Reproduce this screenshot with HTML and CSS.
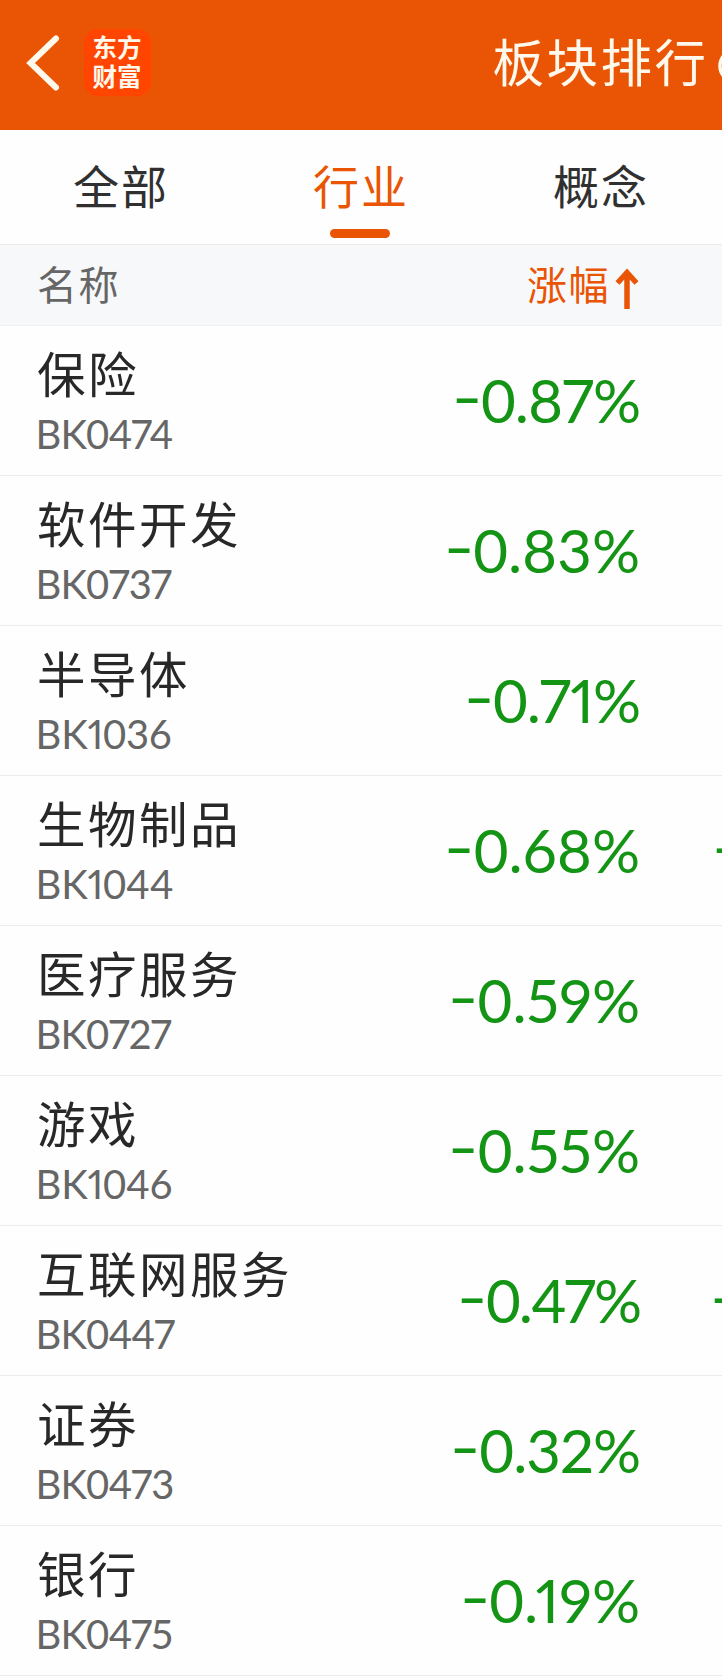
FILE: index.html
```html
<!DOCTYPE html>
<html lang="zh-CN">
<head>
<meta charset="utf-8">
<title>板块排行</title>
<link rel="stylesheet" href="styles.css">
</head>
<body>
<header class="topbar">
  <svg class="back" viewBox="0 0 34 56" width="34" height="56"><path d="M30 3.500 4.500 28 30 52.500" fill="none" stroke="#fff8ec" stroke-width="6" stroke-linecap="round" stroke-linejoin="miter"/></svg>
  <div class="brand"><span>东方</span><span>财富</span></div>
  <h1 class="title">板块排行</h1>
  <svg class="help" viewBox="0 0 36 36" width="36" height="36"><circle cx="18" cy="18" r="16" fill="none" stroke="#fff8ec" stroke-width="3.500"/></svg>
</header>
<nav class="tabs">
  <a class="tab">全部</a>
  <a class="tab active">行业</a>
  <a class="tab">概念</a>
</nav>
<main class="table">
  <div class="head">
    <span class="head-name">名称</span>
    <span class="head-sort">涨幅</span>
    <svg class="arrow" viewBox="0 0 24 42" width="24" height="42"><path d="M12 41V5M2.500 15 12 4.500 21.500 15" fill="none" stroke="#e95504" stroke-width="5.500"/></svg>
  </div>
  <div class="row"><div class="info"><b class="name">保险</b><span class="code">BK<i class="zero">0</i>474</span></div><span class="rate tight"><i class="sign">-</i><i class="zero">0</i>.87%</span></div>
  <div class="row"><div class="info"><b class="name">软件开发</b><span class="code">BK<i class="zero">0</i>737</span></div><span class="rate"><i class="sign">-</i><i class="zero">0</i>.83%</span></div>
  <div class="row"><div class="info"><b class="name">半导体</b><span class="code one">BK1<i class="zero">0</i>36</span></div><span class="rate tight"><i class="sign">-</i><i class="zero">0</i>.71%</span></div>
  <div class="row"><div class="info"><b class="name">生物制品</b><span class="code one">BK1<i class="zero">0</i>44</span></div><span class="rate"><i class="sign">-</i><i class="zero">0</i>.68%</span><span class="next"><i class="sign">-</i></span></div>
  <div class="row"><div class="info"><b class="name">医疗服务</b><span class="code">BK<i class="zero">0</i>727</span></div><span class="rate"><i class="sign">-</i><i class="zero">0</i>.59%</span></div>
  <div class="row"><div class="info"><b class="name">游戏</b><span class="code one">BK1<i class="zero">0</i>46</span></div><span class="rate"><i class="sign">-</i><i class="zero">0</i>.55%</span></div>
  <div class="row"><div class="info"><b class="name">互联网服务</b><span class="code">BK<i class="zero">0</i>447</span></div><span class="rate tighter"><i class="sign">-</i><i class="zero">0</i>.47%</span><span class="next wide"><i class="sign">-</i></span></div>
  <div class="row"><div class="info"><b class="name">证券</b><span class="code">BK<i class="zero">0</i>473</span></div><span class="rate tight"><i class="sign">-</i><i class="zero">0</i>.32%</span></div>
  <div class="row"><div class="info"><b class="name">银行</b><span class="code">BK<i class="zero">0</i>475</span></div><span class="rate"><i class="sign">-</i><i class="zero">0</i>.19%</span></div>
</main>
</body>
</html>
```
FILE: styles.css
```css
* { box-sizing: border-box; }
body {
  margin: 0;
  width: 722px;
  height: 1680px;
  overflow: hidden;
  background: #fefefe;
  font-family: "Noto Sans CJK SC", sans-serif;
  color: #282828;
}
.topbar {
  display: flex;
  align-items: center;
  height: 130px;
  padding-left: 26px;
  background: #e95504;
  color: #fff8ec;
  overflow: hidden;
}
.back { flex: none; margin-top: -5px; }
.brand {
  flex: none;
  display: flex;
  flex-direction: column;
  align-items: center;
  width: 67px;
  height: 67px;
  margin: -5px 0 0 23.500px;
  padding-top: 3px;
  border-radius: 14px;
  background: #ff4500;
  font-size: 24.500px;
  font-weight: 700;
  line-height: 29px;
}
.title {
  flex: none;
  margin: -10px 0 0 342px;
  font-size: 51.500px;
  font-weight: 400;
  line-height: 70px;
  letter-spacing: 2.500px;
}
.help { flex: none; margin: 2px 0 0 9.500px; }
.tabs {
  display: flex;
  height: 115px;
  border-bottom: 1px solid #ebebeb;
}
.tab {
  flex: none;
  display: flex;
  flex-direction: column;
  align-items: center;
  width: 240px;
  padding-top: 21px;
  font-size: 46px;
  line-height: 66px;
  letter-spacing: 2px;
  text-indent: 2px;
  color: #303030;
}
.active { color: #e95504; }
.active::after {
  content: "";
  width: 60px;
  height: 9px;
  margin-top: 12px;
  border-radius: 5px;
  background: #e95504;
}
.head {
  display: flex;
  align-items: center;
  height: 81px;
  padding-left: 37px;
  background: #f7f8fa;
  border-bottom: 1px solid #f0f1f3;
  font-size: 40px;
  line-height: 60px;
  letter-spacing: 1.500px;
  color: #666;
}
.head-name, .head-sort { margin-top: -5px; }
.head-name { width: 490px; }
.head-sort { color: #e95504; }
.arrow { margin-top: 7px; margin-left: 5px; }
.row {
  display: flex;
  height: 150px;
  padding-left: 37px;
  border-bottom: 1px solid #ebebeb;
}
.info {
  flex: none;
  width: 300px;
  display: flex;
  flex-direction: column;
  padding-top: 15px;
}
.name {
  font-size: 48.500px;
  font-weight: 400;
  line-height: 62px;
  letter-spacing: 2.500px;
  white-space: nowrap;
}
.code {
  margin: 3px 0 0 -1.500px;
  font-family: Lato, sans-serif;
  font-size: 40px;
  line-height: 56px;
  letter-spacing: -0.900px;
  font-variant-numeric: proportional-nums;
  color: #666;
}
.one { letter-spacing: -0.200px; }
.rate {
  flex: none;
  width: 303px;
  font-family: Lato, sans-serif;
  font-size: 60px;
  line-height: 148px;
  text-align: right;
  font-variant-numeric: proportional-nums;
  color: #149414;
}
.tight { letter-spacing: -1px; }
.tighter { letter-spacing: -2px; }
.zero {
  font-style: normal;
  font-variant-numeric: tabular-nums;
}
.sign {
  display: inline-block;
  margin-right: 3px;
  font-style: normal;
  letter-spacing: 0;
  transform: translateY(-4px) scaleX(1.400);
}
.next {
  flex: none;
  width: 6px;
  overflow: hidden;
  margin-left: 76px;
  font-family: Lato, sans-serif;
  font-size: 60px;
  line-height: 148px;
  color: #149414;
}
.wide {
  width: 8px;
  margin-left: 74px;
}
```
